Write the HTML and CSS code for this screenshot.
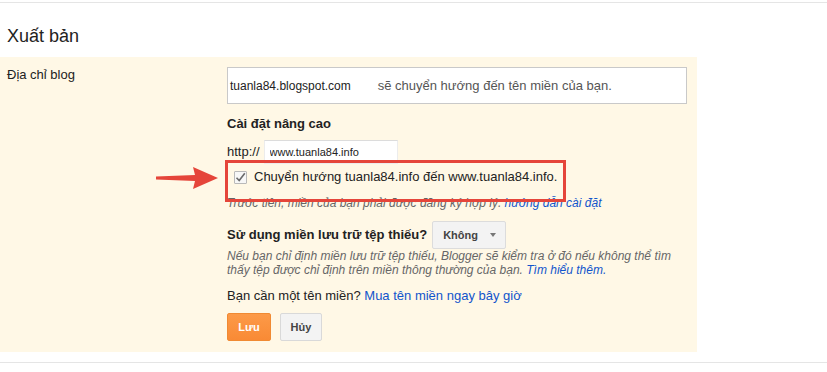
FILE: index.html
```html
<!DOCTYPE html>
<html lang="vi">
<head>
<meta charset="utf-8">
<title>Xuất bản</title>
<link rel="stylesheet" href="styles.css">
</head>
<body>
<div class="topline"></div>
<h2 class="title">Xuất bản</h2>
<div class="panel">
  <div class="label">Địa chỉ blog</div>
  <div class="content">
    <div class="addr-box"><span class="addr">tuanla84.blogspot.com</span><span class="addr-note">sẽ chuyển hướng đến tên miền của bạn.</span></div>
    <div class="section-title">Cài đặt nâng cao</div>
    <div class="http-row"><span class="http">http://</span><input class="domain" type="text" value="www.tuanla84.info"></div>
    <div class="redirect-row">
      <span class="cb"><svg width="11" height="11" viewBox="0 0 11 11"><path d="M1.5 5.8 L4.2 8.6 L9.8 1.2" fill="none" stroke="#6b6b6b" stroke-width="1.6"/></svg></span>
      <span class="redirect-text">Chuyển hướng tuanla84.info đến www.tuanla84.info.</span>
      <span class="annot-box"></span>
      <svg class="annot-arrow" width="62" height="22" viewBox="0 0 62 22"><polygon points="0,9.6 39,8 37,0 62,11 37,22 39,14 0,12.4" fill="#e5453a"/></svg>
    </div>
    <div class="hint hint-first">Trước tiên, miền của bạn phải được đăng ký hợp lý. <a href="#">hướng dẫn cài đặt</a></div>
    <div class="missing-row"><span class="bold">Sử dụng miền lưu trữ tệp thiếu?</span><button class="dropdown">Không <span class="caret"></span></button></div>
    <div class="hint hint-second">Nếu bạn chỉ định miền lưu trữ tệp thiếu, Blogger sẽ kiểm tra ở đó nếu không thể tìm thấy tệp được chỉ định trên miền thông thường của bạn. <a href="#">Tìm hiểu thêm.</a></div>
    <div class="buy">Bạn cần một tên miền? <a href="#">Mua tên miền ngay bây giờ</a></div>
    <div class="actions"><button class="btn save">Lưu</button><button class="btn cancel">Hủy</button></div>
  </div>
</div>
<div class="bottomline"></div>
</body>
</html>
```

FILE: styles.css
```css
html, body {
  margin: 0;
  padding: 0;
  background: #fff;
}
body {
  font-family: "Liberation Sans", Arial, sans-serif;
  font-size: 13px;
  line-height: 16px;
  color: #222;
  width: 827px;
  height: 372px;
  overflow: hidden;
}
.topline {
  margin-top: 2px;
  height: 1px;
  background: #e5e5e5;
}
.title {
  margin: 23px 0 11px 7px;
  font-size: 18px;
  line-height: 20px;
  font-weight: normal;
  color: #222;
}
.panel {
  width: 680px;
  background: #fff8e6;
  padding: 10px 10px 11px 7px;
  display: flex;
}
.label {
  width: 220px;
  flex: none;
}
.content {
  width: 460px;
  display: flex;
  flex-direction: column;
  align-items: flex-start;
}
.addr-box {
  box-sizing: border-box;
  width: 460px;
  height: 37px;
  border: 1px solid #c9c9c9;
  background: #fff;
  padding: 10px 0 0 2px;
  display: flex;
  align-items: baseline;
  line-height: 15px;
}
.addr {
  font-size: 12px;
}
.addr-note {
  margin-left: 27px;
  color: #555;
}
.section-title {
  margin-top: 12px;
  font-weight: bold;
}
.http-row {
  margin-top: 8px;
  display: flex;
  align-items: center;
}
.http {
  margin-right: 4px;
}
.domain {
  box-sizing: border-box;
  width: 134px;
  height: 24px;
  border: 1px solid #ececec;
  border-top-color: #dcdcdc;
  background: #fff;
  font-family: "Liberation Sans", Arial, sans-serif;
  font-size: 11px;
  color: #222;
  padding: 0 5px;
  margin: 0;
  outline: none;
}
.redirect-row {
  position: relative;
  margin-top: 4px;
  display: flex;
  align-items: center;
  height: 18px;
}
.cb {
  box-sizing: border-box;
  width: 13px;
  height: 13px;
  margin-left: 7px;
  margin-right: 7px;
  border: 1px solid #b9b9b9;
  border-radius: 1px;
  background: #f7f7f7;
  display: flex;
  align-items: center;
  justify-content: center;
}
.cb svg {
  display: block;
}
.annot-box {
  position: absolute;
  left: -2px;
  top: -8px;
  width: 341px;
  height: 42px;
  box-sizing: border-box;
  border: 3px solid #e5453a;
}
.annot-arrow {
  position: absolute;
  left: -71px;
  top: -1px;
}
.hint {
  font-size: 12px;
  font-style: italic;
  color: #666;
  line-height: 14px;
}
.hint a, .buy a {
  color: #1155cc;
  text-decoration: none;
}
.hint-first {
  margin-top: 10px;
}
.missing-row {
  margin-top: 11px;
  display: flex;
  align-items: center;
}
.bold {
  font-weight: bold;
}
.dropdown {
  margin-left: 5px;
  box-sizing: border-box;
  width: 74px;
  height: 28px;
  border: 1px solid #dcdcdc;
  border-radius: 2px;
  background: #f3f3f3;
  font-family: "Liberation Sans", Arial, sans-serif;
  font-size: 11px;
  font-weight: bold;
  color: #444;
  padding: 0 0 0 10px;
  display: flex;
  align-items: center;
}
.caret {
  margin-left: 12px;
  width: 0;
  height: 0;
  border-left: 3.5px solid transparent;
  border-right: 3.5px solid transparent;
  border-top: 4px solid #777;
}
.hint-second {
  margin-top: 0;
  line-height: 14px;
  width: 460px;
}
.buy {
  margin-top: 11px;
}
.actions {
  margin-top: 9px;
  display: flex;
  gap: 9px;
}
.btn {
  box-sizing: border-box;
  height: 28px;
  border-radius: 2px;
  font-family: "Liberation Sans", Arial, sans-serif;
  font-size: 11px;
  font-weight: bold;
  padding: 0;
  margin: 0;
}
.save {
  width: 44px;
  border: 1px solid #f08a33;
  background: linear-gradient(#fc9a48, #f98a35);
  color: #fff;
}
.cancel {
  width: 42px;
  border: 1px solid #d9d9d9;
  background: #f3f3f3;
  color: #444;
}
.bottomline {
  margin-top: 10px;
  height: 1px;
  background: #e5e5e5;
}
```
